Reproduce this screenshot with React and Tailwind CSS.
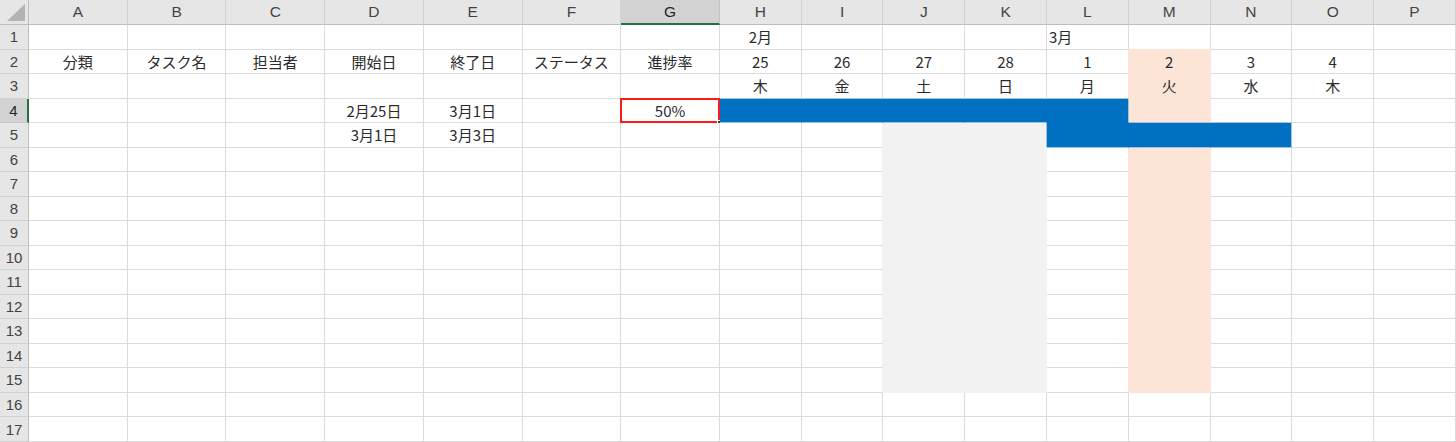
import React from "react";

const COLS = ["A","B","C","D","E","F","G","H","I","J","K","L","M","N","O","P"];
const ROWS = Array.from({ length: 17 }, (_, i) => i + 1);

const TEXT = {
  "1-7": { t: "2月", a: "center" },
  "1-11": { t: "3月", a: "left" },
  "2-0": { t: "分類" }, "2-1": { t: "タスク名" }, "2-2": { t: "担当者" },
  "2-3": { t: "開始日" }, "2-4": { t: "終了日" }, "2-5": { t: "ステータス" },
  "2-6": { t: "進捗率" }, "2-7": { t: "25" }, "2-8": { t: "26" }, "2-9": { t: "27" },
  "2-10": { t: "28" }, "2-11": { t: "1" }, "2-12": { t: "2" }, "2-13": { t: "3" }, "2-14": { t: "4" },
  "3-7": { t: "木" }, "3-8": { t: "金" }, "3-9": { t: "土" }, "3-10": { t: "日" },
  "3-11": { t: "月" }, "3-12": { t: "火" }, "3-13": { t: "水" }, "3-14": { t: "木" },
  "4-3": { t: "2月25日" }, "4-4": { t: "3月1日" }, "4-6": { t: "50%" },
  "5-3": { t: "3月1日" }, "5-4": { t: "3月3日" },
};

function fill(r, c) {
  if (r < 1 || r > 17 || c < 0 || c > 15) return "none";
  if (r === 4 && c >= 7 && c <= 11) return "blue";
  if (r === 5 && c >= 11 && c <= 13) return "blue";
  if (c === 12 && r >= 2 && r <= 15) return "peach";
  if ((c === 9 || c === 10) && r >= 5 && r <= 15) return "gray";
  return "none";
}

function edge(a, b) {
  if (a === "none" && b === "none") return "grid";
  if (a === b) return a;
  if (a === "blue" || b === "blue") return "blueEdge";
  if (a === "none") return b;
  return a;
}

const BG = {
  none: "bg-white",
  blue: "bg-[#0070c0]",
  peach: "bg-[#fce4d6]",
  gray: "bg-[#f2f2f2]",
};
const BR = {
  grid: "border-r-[#dcdcdc]",
  blue: "border-r-[#0070c0]",
  blueEdge: "border-r-[#9dc3e6]",
  peach: "border-r-[#fce4d6]",
  gray: "border-r-[#f2f2f2]",
};
const BB = {
  grid: "border-b-[#dcdcdc]",
  blue: "border-b-[#0070c0]",
  blueEdge: "border-b-[#9dc3e6]",
  peach: "border-b-[#fce4d6]",
  gray: "border-b-[#f2f2f2]",
};

const CJK = "font-['Noto_Sans_CJK_JP','Noto_Sans',sans-serif]";

function Cell({ r, c }) {
  const f = fill(r, c);
  const right = edge(f, fill(r, c + 1));
  const bottom = edge(f, fill(r + 1, c));
  const d = TEXT[`${r}-${c}`];
  const align = d && d.a === "left" ? "justify-start pl-[2px]" : "justify-center";
  return (
    <div
      className={`relative flex items-center ${align} ${BG[f]} border-r border-b ${BR[right]} ${BB[bottom]} ${CJK} text-[15px] leading-none text-[#2b2b2b] whitespace-nowrap`}
    >
      {d ? <span>{d.t}</span> : null}
      {r === 4 && c === 6 ? (
        <>
          <div className="pointer-events-none absolute -left-[1px] -top-[1px] -right-[1px] -bottom-[1px] border-2 border-[#ff1a1a]" />
          <div className="absolute -right-[3px] -bottom-[3px] w-[5px] h-[5px] bg-[#3a3a3a] border border-white" />
        </>
      ) : null}
    </div>
  );
}

export default function App() {
  return (
    <div className="w-[1456px] h-[442px] overflow-hidden bg-white">
      <div className="grid grid-cols-[29px_repeat(7,98.71px)_repeat(9,81.78px)] grid-rows-[25px_repeat(17,24.53px)]">
        <div className="relative bg-[#e6e6e6] border-r border-b border-r-[#bdbdbd] border-b-[#bdbdbd]">
          <svg className="absolute right-[3px] bottom-[3px]" width="18" height="17" viewBox="0 0 18 17">
            <polygon points="18,0 18,17 0,17" fill="#b3b3b3" />
          </svg>
        </div>
        {COLS.map((L, i) =>
          i === 6 ? (
            <div
              key={L}
              className="flex items-center justify-center bg-[#d2d2d2] border-r border-r-[#c2c2c2] border-b-2 border-b-[#217346] font-['Liberation_Sans',Arial,sans-serif] text-[15.5px] text-[#262626] leading-none"
            >
              {L}
            </div>
          ) : (
            <div
              key={L}
              className="flex items-center justify-center bg-[#e6e6e6] border-r border-r-[#d2d2d2] border-b border-b-[#bdbdbd] font-['Liberation_Sans',Arial,sans-serif] text-[15.5px] text-[#444444] leading-none"
            >
              {L}
            </div>
          )
        )}
        {ROWS.map((r) => (
          <React.Fragment key={r}>
            {r === 4 ? (
              <div className="flex items-center justify-center bg-[#d2d2d2] border-r-2 border-r-[#217346] border-b border-b-[#c8c8c8] font-['Liberation_Sans',Arial,sans-serif] text-[15px] text-[#262626] leading-none">
                {r}
              </div>
            ) : (
              <div className="flex items-center justify-center bg-[#e6e6e6] border-r border-r-[#bdbdbd] border-b border-b-[#d2d2d2] font-['Liberation_Sans',Arial,sans-serif] text-[15px] text-[#444444] leading-none">
                {r}
              </div>
            )}
            {COLS.map((L, c) => (
              <Cell key={L} r={r} c={c} />
            ))}
          </React.Fragment>
        ))}
      </div>
    </div>
  );
}
